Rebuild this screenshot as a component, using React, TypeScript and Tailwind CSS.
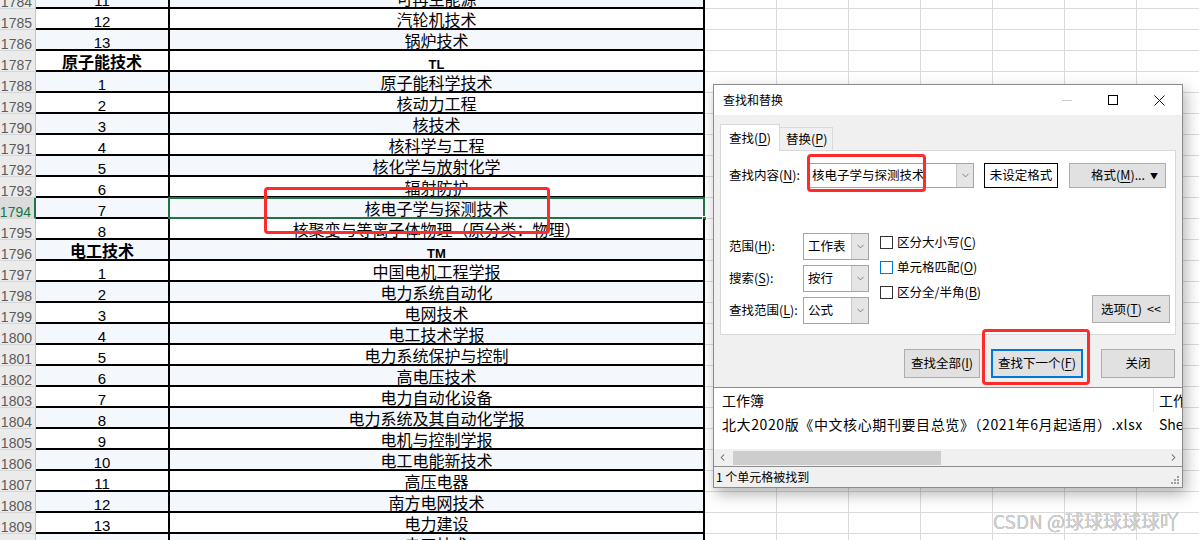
import { ChevronDown, ChevronLeft, ChevronRight } from 'lucide-react';

type SheetRowData = { n: number; a: string; b: string; head?: boolean };

const rows: SheetRowData[] = [
  { n: 1784, a: '11', b: '可再生能源' },
  { n: 1785, a: '12', b: '汽轮机技术' },
  { n: 1786, a: '13', b: '锅炉技术' },
  { n: 1787, a: '原子能技术', b: 'TL', head: true },
  { n: 1788, a: '1', b: '原子能科学技术' },
  { n: 1789, a: '2', b: '核动力工程' },
  { n: 1790, a: '3', b: '核技术' },
  { n: 1791, a: '4', b: '核科学与工程' },
  { n: 1792, a: '5', b: '核化学与放射化学' },
  { n: 1793, a: '6', b: '辐射防护' },
  { n: 1794, a: '7', b: '核电子学与探测技术' },
  { n: 1795, a: '8', b: '核聚变与等离子体物理（原分类：物理）' },
  { n: 1796, a: '电工技术', b: 'TM', head: true },
  { n: 1797, a: '1', b: '中国电机工程学报' },
  { n: 1798, a: '2', b: '电力系统自动化' },
  { n: 1799, a: '3', b: '电网技术' },
  { n: 1800, a: '4', b: '电工技术学报' },
  { n: 1801, a: '5', b: '电力系统保护与控制' },
  { n: 1802, a: '6', b: '高电压技术' },
  { n: 1803, a: '7', b: '电力自动化设备' },
  { n: 1804, a: '8', b: '电力系统及其自动化学报' },
  { n: 1805, a: '9', b: '电机与控制学报' },
  { n: 1806, a: '10', b: '电工电能新技术' },
  { n: 1807, a: '11', b: '高压电器' },
  { n: 1808, a: '12', b: '南方电网技术' },
  { n: 1809, a: '13', b: '电力建设' },
  { n: 1810, a: '14', b: '电工技术' },
];

function SheetRow({ row }: { row: SheetRowData }) {
  const sel = row.n === 1794;
  const tint = row.n % 2 === 0 ? 'bg-[#f4f8fd]' : 'bg-white';
  return (
    <div className="flex h-[21px] shrink-0">
      <div
        className={`w-[36px] shrink-0 flex items-end justify-end pr-[3px] border-b border-b-[#d6d6d6] text-[14px] leading-[14px] ${
          sel
            ? 'bg-[#dcdcdc] text-[#217346] border-r-2 border-r-[#217346]'
            : 'bg-[#ebebeb] text-[#5b5b5b] border-r border-r-[#c4c4c4]'
        }`}
      >
        <span className="translate-y-[1px]">{row.n}</span>
      </div>
      <div
        className={`w-[134px] shrink-0 flex items-end justify-center border-r-2 border-b-2 border-black whitespace-nowrap ${tint} ${
          row.head ? 'text-[16px] font-bold leading-[18px]' : 'text-[15px] leading-[16px]'
        }`}
      >
        <span className="translate-y-[2px]">{row.a}</span>
      </div>
      <div
        className={`relative w-[535px] shrink-0 flex items-end justify-center border-r-2 border-b-2 border-black whitespace-nowrap ${tint} ${
          row.head ? 'text-[13px] font-bold leading-[15px]' : 'text-[16px] leading-[18px]'
        }`}
      >
        <span className="translate-y-[2px]">{row.b}</span>
        {sel && (
          <div className="absolute left-[-2px] top-[-1px] right-[-2px] bottom-[-2px] border-2 border-[#217346]">
            <div className="absolute right-[-4px] bottom-[-4px] w-[5px] h-[5px] bg-[#217346] border border-white" />
          </div>
        )}
      </div>
      {Array.from({ length: 7 }).map((_, i) => (
        <div key={i} className="w-[72px] shrink-0 border-r border-b border-[#dadada] bg-white" />
      ))}
    </div>
  );
}

function Acc({ k }: { k: string }) {
  return (
    <>
      (<span className="underline underline-offset-2">{k}</span>)
    </>
  );
}

function Select({ value }: { value: string }) {
  return (
    <div className="flex w-[66px] h-[27px] border border-[#a5a5a5] bg-white">
      <div className="flex-1 flex items-center pl-[4px] text-[12.5px]">{value}</div>
      <div className="w-[17px] flex items-center justify-center bg-[#e5e5e5] border-l border-[#c8c8c8]">
        <ChevronDown size={11} strokeWidth={1.5} color="#555" />
      </div>
    </div>
  );
}

function Check({ label, k, focus }: { label: string; k: string; focus?: boolean }) {
  return (
    <div className="flex items-center h-[25px] gap-[4px] text-[12.5px]">
      <div className={`w-[13px] h-[13px] bg-white border ${focus ? 'border-[#0078d7]' : 'border-[#333]'}`} />
      <span>
        {label}
        <Acc k={k} />
      </span>
    </div>
  );
}

function Dialog() {
  return (
    <div className="absolute left-[713px] top-[84px] w-[470px] h-[404px] bg-[#f0f0f0] border border-[#8c8c8c] shadow-[3px_6px_14px_rgba(0,0,0,0.3)] flex flex-col text-[12px] text-black font-['Noto_Sans_CJK_SC',sans-serif]">
      <div className="h-[30px] bg-white flex items-center justify-between shrink-0">
        <span className="pl-[9px]">查找和替换</span>
        <div className="flex h-full">
          <div className="w-[46px] flex items-center justify-center">
            <div className="w-[10px] h-px bg-[#cccccc]" />
          </div>
          <div className="w-[46px] flex items-center justify-center">
            <div className="w-[10px] h-[10px] border border-black" />
          </div>
          <div className="w-[46px] flex items-center justify-center">
            <svg width="11" height="11" viewBox="0 0 11 11">
              <path d="M0.5 0.5L10.5 10.5M10.5 0.5L0.5 10.5" stroke="#111" strokeWidth="1" />
            </svg>
          </div>
        </div>
      </div>

      <div className="px-[6px] shrink-0">
        <div className="flex items-end h-[26px] mt-[9px]">
          <div className="relative z-10 w-[60px] h-[27px] -mb-px bg-white border border-[#d9d9d9] border-b-0 flex items-center pl-[8px] text-[12.5px]">
            查找<Acc k="D" />
          </div>
          <div className="w-[53px] h-[23px] bg-[#f0f0f0] border border-l-0 border-b-0 border-[#d9d9d9] flex items-center pl-[6px] text-[12.5px]">
            替换<Acc k="P" />
          </div>
        </div>

        <div className="relative h-[185px] bg-white border border-[#d9d9d9] flex flex-col">
          <div className="flex items-center mt-[12px] pl-[8px]">
            <div className="w-[78px] text-[12.5px]">
              查找内容<Acc k="N" />:
            </div>
            <div className="flex w-[167px] h-[25px] border border-[#a5a5a5] bg-white">
              <div className="flex-1 flex items-center pl-[4px] text-[12.5px]">核电子学与探测技术</div>
              <div className="w-[17px] flex items-center justify-center bg-[#e5e5e5] border-l border-[#c8c8c8]">
                <ChevronDown size={11} strokeWidth={1.5} color="#555" />
              </div>
            </div>
            <div className="ml-[10px] w-[74px] h-[25px] bg-white border border-black flex items-center justify-center text-[12.5px]">
              未设定格式
            </div>
            <div className="ml-[11px] w-[97px] h-[25px] bg-[#e1e1e1] border border-[#adadad] flex items-center text-[12.5px]">
              <span className="pl-[21px]">
                格式<Acc k="M" />...
              </span>
              <span className="ml-auto mr-[7px] text-[8px]">▼</span>
            </div>
          </div>

          <div className="flex mt-[45px] pl-[8px]">
            <div className="flex flex-col gap-[5px]">
              <div className="flex items-center h-[27px]">
                <div className="w-[74px] text-[12.5px]">
                  范围<Acc k="H" />:
                </div>
                <Select value="工作表" />
              </div>
              <div className="flex items-center h-[27px]">
                <div className="w-[74px] text-[12.5px]">
                  搜索<Acc k="S" />:
                </div>
                <Select value="按行" />
              </div>
              <div className="flex items-center h-[27px]">
                <div className="w-[74px] text-[12.5px]">
                  查找范围<Acc k="L" />:
                </div>
                <Select value="公式" />
              </div>
            </div>
            <div className="ml-[11px] -mt-[3px] flex flex-col">
              <Check label="区分大小写" k="C" />
              <Check label="单元格匹配" k="O" focus />
              <Check label="区分全/半角" k="B" />
            </div>
            <div className="ml-auto self-end mr-[5px] mb-[1px] w-[78px] h-[28px] bg-[#e1e1e1] border border-[#adadad] flex items-center justify-center text-[12.5px]">
              选项<Acc k="T" />
              <span className="ml-[5px]">&lt;&lt;</span>
            </div>
          </div>
        </div>
      </div>

      <div className="flex justify-end mt-[14px] pr-[7px] h-[29px] shrink-0 text-[12.5px]">
        <div className="w-[76px] bg-[#e1e1e1] border border-[#adadad] flex items-center justify-center">
          查找全部<Acc k="I" />
        </div>
        <div className="ml-[11px] w-[92px] bg-[#e1e1e1] border-2 border-[#0078d7] flex items-center justify-center">
          查找下一个<Acc k="F" />
        </div>
        <div className="ml-[18px] w-[74px] bg-[#e1e1e1] border border-[#adadad] flex items-center justify-center">
          关闭
        </div>
      </div>

      <div className="mt-[9px] h-[80px] shrink-0 bg-white border-y border-[#8c8c8c] flex flex-col overflow-hidden text-[14px]">
        <div className="flex h-[24px] shrink-0">
          <div className="w-[439px] shrink-0 flex items-center pl-[8px]">工作簿</div>
          <div className="border-l border-[#e3e3e3] flex items-center pl-[5px] whitespace-nowrap">工作表</div>
        </div>
        <div className="flex h-[24px] shrink-0 whitespace-nowrap">
          <div className="w-[439px] shrink-0 flex items-center pl-[8px] tracking-[0.6px]">
            北大2020版《中文核心期刊要目总览》（2021年6月起适用）.xlsx
          </div>
          <div className="flex items-center pl-[6px]">Sheet1</div>
        </div>
        <div className="flex-1" />
        <div className="h-[17px] shrink-0 bg-[#f0f0f0] flex items-center">
          <div className="w-[17px] flex items-center justify-center">
            <ChevronLeft size={11} strokeWidth={2.2} color="#606060" />
          </div>
          <div className="ml-[2px] w-[208px] h-[14px] bg-[#cdcdcd]" />
          <div className="ml-auto w-[17px] flex items-center justify-center">
            <ChevronRight size={11} strokeWidth={2.2} color="#606060" />
          </div>
        </div>
      </div>

      <div className="relative h-[20px] shrink-0 flex items-center pl-[2px] text-[12px]">
        1 个单元格被找到
        <svg className="absolute right-[2px] bottom-[2px]" width="10" height="10" viewBox="0 0 10 10">
          <g fill="#a0a0a0">
            <rect x="7" y="1" width="2" height="2" />
            <rect x="4" y="4" width="2" height="2" />
            <rect x="7" y="4" width="2" height="2" />
            <rect x="1" y="7" width="2" height="2" />
            <rect x="4" y="7" width="2" height="2" />
            <rect x="7" y="7" width="2" height="2" />
          </g>
        </svg>
      </div>
    </div>
  );
}

export default function App() {
  return (
    <div className="relative w-[1199px] h-[540px] overflow-hidden bg-white text-black font-['Liberation_Sans','Noto_Sans_CJK_SC',sans-serif]">
      <div className="flex flex-col mt-[-12px]">
        {rows.map(r => (
          <SheetRow key={r.n} row={r} />
        ))}
      </div>

      <Dialog />

      {/* red annotation boxes */}
      <div className="absolute left-[264px] top-[187px] w-[286px] h-[47px] border-[3px] border-[#ff2b2b] rounded-[4px] pointer-events-none" />
      <div className="absolute left-[807px] top-[154px] w-[119px] h-[38px] border-[3px] border-[#ff2b2b] rounded-[4px] pointer-events-none" />
      <div className="absolute left-[982px] top-[329px] w-[108px] h-[56px] border-[3px] border-[#ff2b2b] rounded-[4px] pointer-events-none" />

      <div className="absolute left-[993px] top-[507px] text-[19px] leading-[28px] whitespace-nowrap text-[#d2d2d2] [text-shadow:0_0_0.6px_#777] font-['Noto_Sans_CJK_SC',sans-serif]">
        CSDN @球球球球球吖
      </div>
    </div>
  );
}
